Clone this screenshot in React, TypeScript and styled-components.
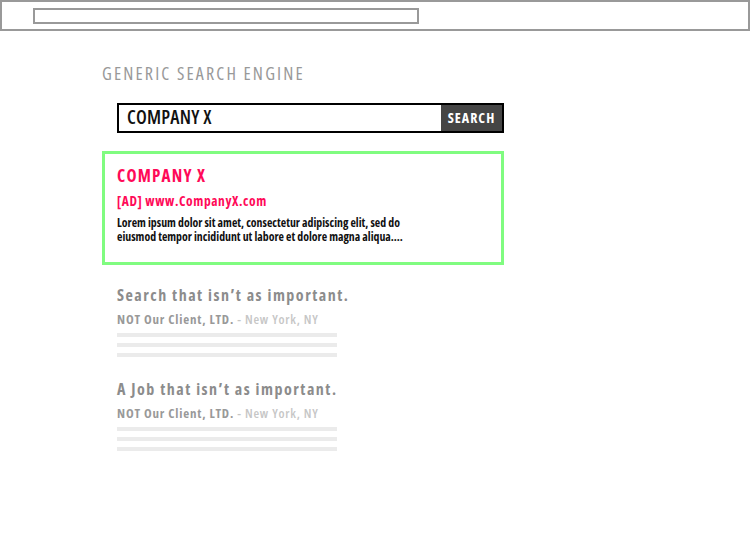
import React from "react";
import styled, { createGlobalStyle } from "styled-components";

const Global = createGlobalStyle`
  html, body { margin: 0; padding: 0; background: #fff; }
  body {
    font-family: "Open Sans", "Liberation Sans", sans-serif;
    font-stretch: condensed;
  }
  * { box-sizing: border-box; }
`;

const Page = styled.div`
  width: 750px;
  height: 550px;
  display: flex;
  flex-direction: column;
`;

const BrowserBar = styled.div`
  height: 31px;
  border: 2px solid #999;
  padding: 6px 0 0 31px;
  display: flex;
  align-items: flex-start;
`;

const AddressField = styled.div`
  width: 386px;
  height: 16px;
  border: 2px solid #999;
`;

const Main = styled.main`
  padding: 30px 0 0 102px;
  display: flex;
  flex-direction: column;
`;

const EngineTitle = styled.h1`
  margin: 0;
  font-size: 18px;
  line-height: 24px;
  font-weight: 400;
  letter-spacing: 2.15px;
  color: #999;
`;

const SearchForm = styled.div`
  margin: 18px 0 0 15px;
  width: 387px;
  height: 30px;
  border: 2px solid #000;
  display: flex;
`;

const Query = styled.div`
  flex: 1;
  padding: 0 0 3px 8px;
  display: flex;
  align-items: center;
  font-size: 19px;
  font-weight: 600;
  letter-spacing: 0.2px;
  color: #111;
`;

const SearchButton = styled.div`
  width: 61px;
  background: #454545;
  color: #fff;
  display: flex;
  align-items: center;
  justify-content: center;
  padding-bottom: 1px;
  font-size: 14px;
  font-weight: 700;
  letter-spacing: 1px;
`;

const AdCard = styled.section`
  margin-top: 18px;
  width: 402px;
  height: 114px;
  border: 3px solid #80fc80;
  padding: 12px 12px 0 12px;
  display: flex;
  flex-direction: column;
`;

const AdTitle = styled.div`
  font-size: 17px;
  line-height: 20px;
  font-weight: 700;
  letter-spacing: 1.2px;
  color: #ff0a58;
`;

const AdUrl = styled.div`
  margin-top: 7px;
  font-size: 13.5px;
  line-height: 16px;
  font-weight: 700;
  letter-spacing: 0.6px;
  color: #ff0a58;
`;

const AdText = styled.p`
  margin: 6px 0 0 0;
  width: 305px;
  font-size: 11.8px;
  line-height: 14px;
  font-weight: 700;
  color: #111;
`;

const Result = styled.section<{ $top: number }>`
  margin: ${(p) => p.$top}px 0 0 15px;
  display: flex;
  flex-direction: column;
`;

const ResultTitle = styled.div`
  font-size: 16px;
  line-height: 20px;
  font-weight: 700;
  letter-spacing: 1.5px;
  color: #8c8c8c;
`;

const ResultMeta = styled.div`
  margin-top: 6px;
  font-size: 13px;
  line-height: 16px;
  font-weight: 700;
  letter-spacing: 0.8px;
  color: #999;
`;

const Location = styled.span`
  font-weight: 600;
  color: #c6c6c6;
`;

const Lines = styled.div`
  margin-top: 6px;
  display: flex;
  flex-direction: column;
  gap: 6px;
`;

const Line = styled.div`
  width: 220px;
  height: 4px;
  background: #ebebeb;
`;

const results = [
  { title: "Search that isn\u2019t as important.", top: 20 },
  { title: "A Job that isn\u2019t as important.", top: 22 },
];

export default function App() {
  return (
    <Page>
      <Global />
      <BrowserBar>
        <AddressField />
      </BrowserBar>
      <Main>
        <EngineTitle>GENERIC SEARCH ENGINE</EngineTitle>
        <SearchForm>
          <Query>COMPANY X</Query>
          <SearchButton>SEARCH</SearchButton>
        </SearchForm>
        <AdCard>
          <AdTitle>COMPANY X</AdTitle>
          <AdUrl>[AD] www.CompanyX.com</AdUrl>
          <AdText>
            Lorem ipsum dolor sit amet, consectetur adipiscing elit, sed do eiusmod tempor incididunt ut labore et dolore magna aliqua....
          </AdText>
        </AdCard>
        {results.map((r) => (
          <Result key={r.title} $top={r.top}>
            <ResultTitle>{r.title}</ResultTitle>
            <ResultMeta>
              NOT Our Client, LTD. <Location>- New York, NY</Location>
            </ResultMeta>
            <Lines>
              <Line />
              <Line />
              <Line />
            </Lines>
          </Result>
        ))}
      </Main>
    </Page>
  );
}
